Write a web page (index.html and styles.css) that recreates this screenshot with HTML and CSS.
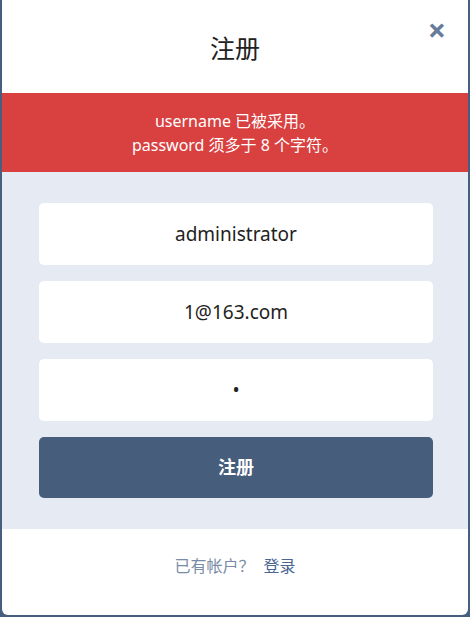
FILE: index.html
```html
<!DOCTYPE html>
<html lang="zh-CN">
<head>
    <meta charset="UTF-8">
    <meta name="viewport" content="width=device-width, initial-scale=1.0">
    <title>注册</title>
    <link rel="stylesheet" href="styles.css">
</head>
<body>
    <div class="modal">
        <div class="modal-header">
            <h1 class="title">注册</h1>
            <a class="close">&times;</a>
        </div>

        <div class="errors">
            <div>username 已被采用。</div>
            <div>password 须多于 8 个字符。</div>
        </div>

        <form class="modal-body">
            <input class="field" type="text" value="administrator">
            <input class="field" type="email" value="1@163.com">
            <input class="field" type="password" value="1">
            <button class="submit" type="button">注册</button>
        </form>

        <div class="modal-footer">
            <span class="muted">已有帐户？</span>
            <a class="link" href="#">登录</a>
        </div>
    </div>
</body>
</html>
```

FILE: styles.css
```css
body {
    margin: 0;
    padding: 0;
    background-color: #475f7e;
    font-family: "Noto Sans", "Noto Sans CJK SC", sans-serif;
    color: #222;
}

.modal {
    margin-left: 2px;
    width: 466px;
    height: 615px;
    background-color: #fff;
    border-radius: 0 0 6px 6px;
    display: flex;
    flex-direction: column;
    overflow: hidden;
}

.modal-header {
    position: relative;
    height: 93px;
    display: flex;
    align-items: center;
    justify-content: center;
}

.title {
    margin: 0;
    font-size: 25px;
    font-weight: normal;
    color: #222;
}

.close {
    position: absolute;
    top: 14px;
    right: 22px;
    font-size: 32px;
    font-weight: bold;
    line-height: 1;
    color: #667c9a;
    cursor: pointer;
}

.errors {
    height: 79px;
    background-color: #d94040;
    color: #fff;
    font-size: 16px;
    line-height: 24px;
    text-align: center;
    display: flex;
    flex-direction: column;
    justify-content: center;
}

.modal-body {
    background-color: #e6ebf3;
    padding: 31px 35px 31px 37px;
    display: flex;
    flex-direction: column;
    gap: 16px;
}

.field {
    height: 62px;
    box-sizing: border-box;
    border: none;
    border-radius: 5px;
    background-color: #fff;
    font-family: inherit;
    font-size: 19px;
    color: #222;
    text-align: center;
    outline: none;
}

.submit {
    height: 61px;
    border: none;
    border-radius: 5px;
    background-color: #465d7c;
    color: #fff;
    font-family: inherit;
    font-size: 18px;
    font-weight: bold;
    padding-bottom: 4px;
    cursor: pointer;
}

.modal-footer {
    flex: 1;
    display: flex;
    align-items: center;
    justify-content: center;
    gap: 9px;
    font-size: 16px;
    padding-bottom: 14px;
}

.muted {
    color: #7a8ca5;
}

.link {
    color: #4a6590;
    text-decoration: none;
}
```
